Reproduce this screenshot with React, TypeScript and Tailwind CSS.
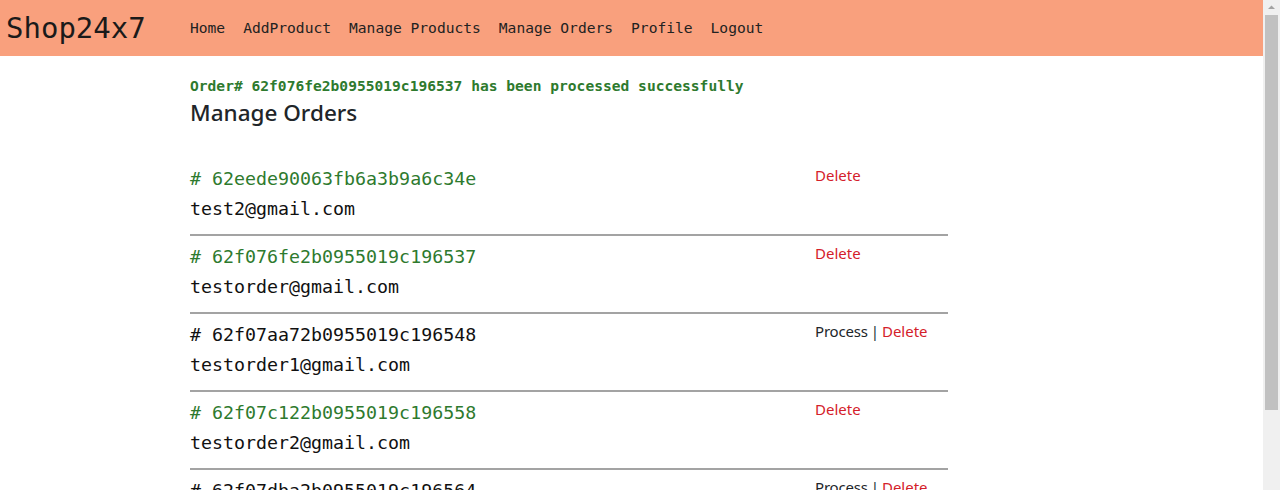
const orders = [
  { id: "62eede90063fb6a3b9a6c34e", email: "test2@gmail.com", processed: true },
  { id: "62f076fe2b0955019c196537", email: "testorder@gmail.com", processed: true },
  { id: "62f07aa72b0955019c196548", email: "testorder1@gmail.com", processed: false },
  { id: "62f07c122b0955019c196558", email: "testorder2@gmail.com", processed: true },
  { id: "62f07dba2b0955019c196564", email: "testorder3@gmail.com", processed: false },
];

const navItems = ["Home", "AddProduct", "Manage Products", "Manage Orders", "Profile", "Logout"];

const mono = "font-['DejaVu_Sans_Mono','Liberation_Mono',monospace]";
const sans = "font-['Noto_Sans','Open_Sans',sans-serif]";

export default function App() {
  return (
    <div className="flex w-[1280px] h-[490px] overflow-hidden bg-white">
      <div className="w-[1263px] flex flex-col overflow-hidden">
        <header className="h-14 shrink-0 bg-[#f9a07d] flex items-center text-[#1a1a1a]">
          <span className={`${mono} text-[29px] pl-[6px] w-[190px] leading-none`}>Shop24x7</span>
          <nav className={`${mono} flex gap-[18px] text-[14.6px]`}>
            {navItems.map((item) => (
              <a key={item} href="#" className="text-[#222]">
                {item}
              </a>
            ))}
          </nav>
        </header>

        <main className="pl-[190px] w-[948px] box-content shrink-0">
          <p className={`${mono} font-bold text-[14.6px] text-[#2e7a2e] mt-[21px] leading-[18px]`}>
            Order# 62f076fe2b0955019c196537 has been processed successfully
          </p>
          <h2 className={`${sans} text-[22.5px] font-medium text-[#212529] leading-[28px] mt-[4px]`}>
            Manage Orders
          </h2>

          <ul className="mt-[37px] w-[758px]">
            {orders.map((o, i) => (
              <li key={o.id} className={i === 0 ? "" : "pt-[6px]"}>
                <div className="flex">
                  <div className={`${mono} w-[625px] text-[18.3px] leading-[30px]`}>
                    <p className={o.processed ? "text-[#2e7a2e]" : "text-[#111]"}># {o.id}</p>
                    <p className="text-[#111]">{o.email}</p>
                  </div>
                  <div className={`${sans} flex text-[15px] leading-[22px]`}>
                    {!o.processed && (
                      <>
                        <a href="#" className="text-[#212529] tracking-[-0.2px]">Process</a>
                        <span className="text-[#23323c] mx-[3px]">|</span>
                      </>
                    )}
                    <a href="#" className="text-[#d4202a]">Delete</a>
                  </div>
                </div>
                <hr className="mt-[10px] border-0 h-[2px] bg-[#a3a3a3]" />
              </li>
            ))}
          </ul>
        </main>
      </div>

      <div className="w-[17px] shrink-0 bg-[#f0f0f0] flex flex-col items-center">
        <svg width="17" height="15" viewBox="0 0 17 15" className="shrink-0">
          <path d="M5 9 L8.5 5.5 L12 9 Z" fill="#a3a3a3" />
        </svg>
        <div className="w-[13px] h-[395px] shrink-0 bg-[#c1c1c1]" />
      </div>
    </div>
  );
}
